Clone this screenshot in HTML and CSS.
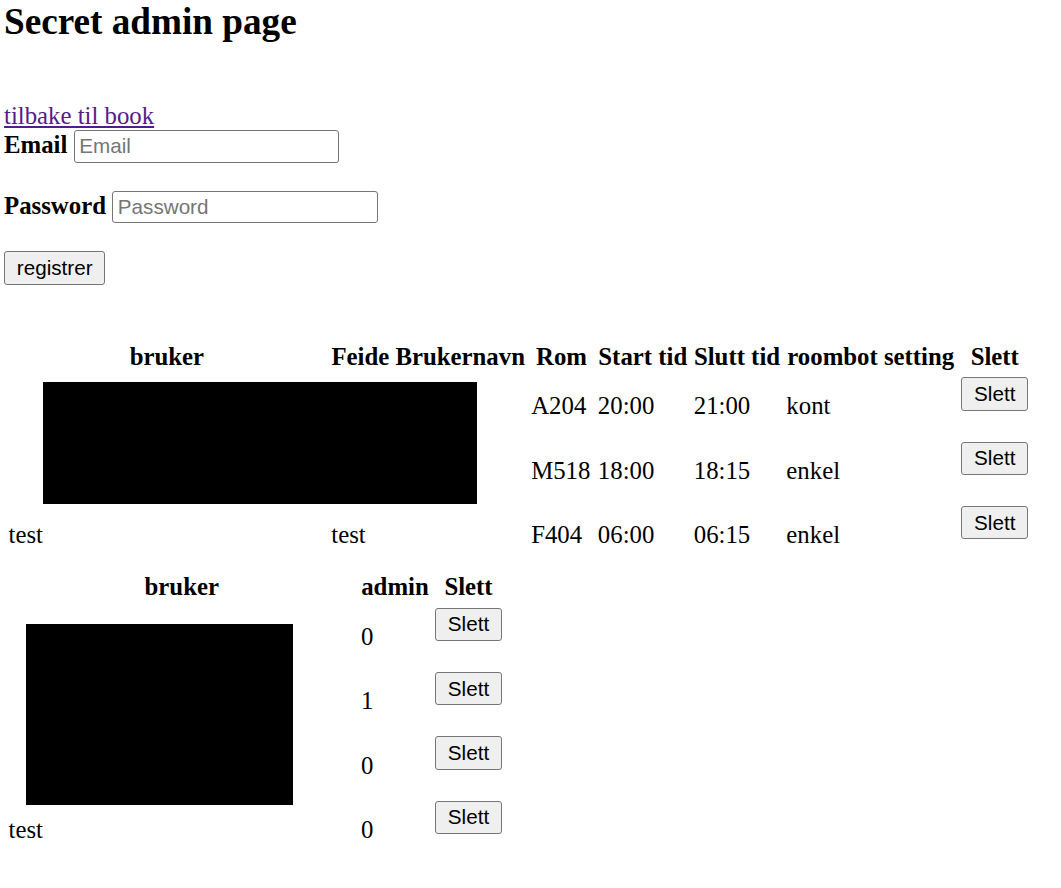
FILE: index.html
```
<!DOCTYPE html>
<html lang="no">
<head>
<meta charset="utf-8">
<title>Secret admin page</title>
<link rel="stylesheet" href="styles.css">
</head>
<body class="page">
<h2 class="title">Secret admin page</h2>
<a class="back-link" href="#">tilbake til book</a>
<form class="register-form">
<label class="field-label" for="email">Email</label> <input class="text-input" id="email" type="text" placeholder="Email"><br><br>
<label class="field-label" for="password">Password</label> <input class="text-input" id="password" type="password" placeholder="Password"><br><br>
<button class="btn" type="button">registrer</button>
</form>
<div class="table-wrap">
<table class="data-table bookings">
<thead>
<tr>
<th class="b-user">bruker</th>
<th class="b-feide">Feide Brukernavn</th>
<th class="b-room">Rom</th>
<th class="b-start">Start tid</th>
<th class="b-end">Slutt tid</th>
<th class="b-setting">roombot setting</th>
<th class="b-del">Slett</th>
</tr>
</thead>
<tbody>
<tr>
<td></td><td></td><td>A204</td><td>20:00</td><td>21:00</td><td>kont</td>
<td><form class="row-form"><button class="btn" type="button">Slett</button></form></td>
</tr>
<tr>
<td></td><td></td><td>M518</td><td>18:00</td><td>18:15</td><td>enkel</td>
<td><form class="row-form"><button class="btn" type="button">Slett</button></form></td>
</tr>
<tr>
<td>test</td><td>test</td><td>F404</td><td>06:00</td><td>06:15</td><td>enkel</td>
<td><form class="row-form"><button class="btn" type="button">Slett</button></form></td>
</tr>
</tbody>
</table>
<div class="redaction redaction-bookings"></div>
</div>
<div class="table-wrap">
<table class="data-table users">
<thead>
<tr>
<th class="u-user">bruker</th>
<th class="u-admin">admin</th>
<th class="u-del">Slett</th>
</tr>
</thead>
<tbody>
<tr>
<td></td><td>0</td>
<td><form class="row-form"><button class="btn" type="button">Slett</button></form></td>
</tr>
<tr>
<td></td><td>1</td>
<td><form class="row-form"><button class="btn" type="button">Slett</button></form></td>
</tr>
<tr>
<td></td><td>0</td>
<td><form class="row-form"><button class="btn" type="button">Slett</button></form></td>
</tr>
<tr>
<td>test</td><td>0</td>
<td><form class="row-form"><button class="btn" type="button">Slett</button></form></td>
</tr>
</tbody>
</table>
<div class="redaction redaction-users"></div>
</div>
</body>
</html>
```
FILE: styles.css
```
.page {
  margin: 0;
  padding: 0 0 0 4px;
  font-family: "Liberation Serif", "Times New Roman", serif;
  font-size: 24.8px;
  color: #000;
  background: #fff;
}

.title {
  margin: 0 0 59px;
  font-size: 37.2px;
  font-weight: bold;
  line-height: normal;
}

.back-link {
  color: #551a8b;
  text-decoration: underline;
}

.register-form {
  margin: 0 0 54px;
}

.field-label {
  font-weight: bold;
}

.text-input {
  box-sizing: border-box;
  width: 265.7px;
  height: 32.7px;
  padding: 0 4.65px;
  border: 1.55px solid #767676;
  border-radius: 3px;
  background: #fff;
  font-family: "Liberation Sans", Arial, sans-serif;
  font-size: 20.67px;
  color: #000;
  margin: 0;
}

.text-input::placeholder {
  color: #757575;
}

.btn {
  -webkit-appearance: none;
  appearance: none;
  box-sizing: border-box;
  height: 33.3px;
  padding: 0 11.85px;
  margin: 0;
  border: 1.55px solid #767676;
  border-radius: 3px;
  background: #efefef;
  color: #000;
  font-family: "Liberation Sans", Arial, sans-serif;
  font-size: 20.67px;
  line-height: normal;
}

.table-wrap {
  position: relative;
}

.data-table {
  border-collapse: separate;
  border-spacing: 3.1px;
  font-size: 24.8px;
}

.data-table th,
.data-table td {
  padding: 1.55px;
  vertical-align: middle;
}

.data-table th {
  font-weight: bold;
  text-align: center;
}

.data-table td {
  text-align: left;
}

.row-form {
  margin: 0 0 25px;
}

.b-user { width: 316.65px; }
.b-feide { width: 193.8px; }
.b-room { width: 60.6px; }
.b-start { width: 89.8px; }
.b-end { width: 86.5px; }
.b-setting { width: 168.8px; }
.b-del { width: 66.4px; }

.u-user { width: 346.45px; }
.u-admin { width: 67.8px; }
.u-del { width: 66.4px; }

.redaction {
  position: absolute;
  background: #000;
}

.redaction-bookings {
  left: 39px;
  top: 43.25px;
  width: 434px;
  height: 121.7px;
}

.redaction-users {
  left: 22px;
  top: 55px;
  width: 266.7px;
  height: 181px;
}
```
